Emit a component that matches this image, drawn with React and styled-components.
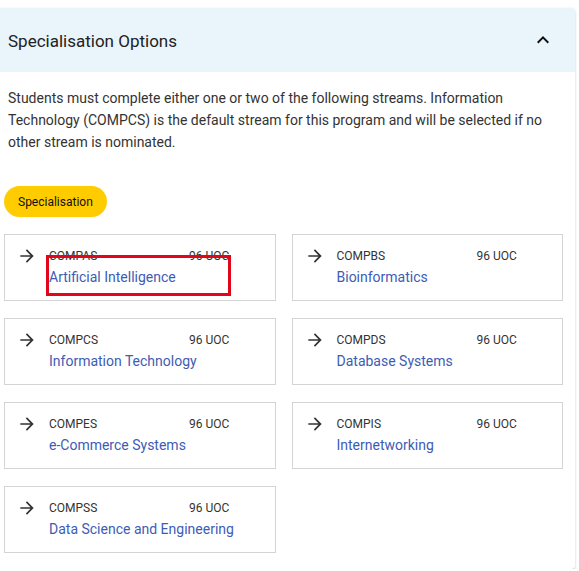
import React from 'react';
import styled, { createGlobalStyle } from 'styled-components';

const GlobalStyle = createGlobalStyle`
  body {
    margin: 0;
    background: #ffffff;
    font-family: Roboto, "Liberation Sans", Arial, sans-serif;
  }
`;

const streams = [
  { code: 'COMPAS', uoc: 96, title: 'Artificial Intelligence', marked: true },
  { code: 'COMPBS', uoc: 96, title: 'Bioinformatics' },
  { code: 'COMPCS', uoc: 96, title: 'Information Technology' },
  { code: 'COMPDS', uoc: 96, title: 'Database Systems' },
  { code: 'COMPES', uoc: 96, title: 'e-Commerce Systems' },
  { code: 'COMPIS', uoc: 96, title: 'Internetworking' },
  { code: 'COMPSS', uoc: 96, title: 'Data Science and Engineering' },
];

const ArrowIcon = () => (
  <svg width="20" height="20" viewBox="0 0 24 24" fill="#333">
    <path d="M12 4l-1.41 1.41L16.17 11H4v2h12.17l-5.58 5.59L12 20l8-8z" />
  </svg>
);

const ChevronUp = () => (
  <svg width="24" height="24" viewBox="0 0 24 24" fill="#111">
    <path d="M12 8l-6 6 1.41 1.41L12 10.83l4.59 4.58L18 14z" />
  </svg>
);

export default function App() {
  return (
    <>
      <GlobalStyle />
      <Panel>
        <Header>
          <Title>Specialisation Options</Title>
          <ChevronUp />
        </Header>
        <Details>
          <Description>
            Students must complete either one or two of the following streams. Information
            Technology (COMPCS) is the default stream for this program and will be selected if no
            other stream is nominated.
          </Description>
          <Badge>Specialisation</Badge>
          <CardGrid>
            {streams.map((s) => (
              <Card key={s.code}>
                <IconCell>
                  <ArrowIcon />
                </IconCell>
                <CardBody>
                  <MetaRow>
                    <Code>{s.code}</Code>
                    <Uoc>{s.uoc} UOC</Uoc>
                  </MetaRow>
                  <StreamTitle>{s.title}</StreamTitle>
                </CardBody>
                {s.marked && <Highlight />}
              </Card>
            ))}
          </CardGrid>
        </Details>
      </Panel>
    </>
  );
}

const Panel = styled.div`
  margin-top: 8px;
  width: 575px;
  background: #fff;
  border-radius: 0 4px 4px 0;
  box-shadow: 0 1px 3px rgba(0, 0, 0, 0.18), 0 1px 1px rgba(0, 0, 0, 0.08);
  overflow: hidden;
`;

const Header = styled.div`
  height: 64px;
  display: flex;
  align-items: center;
  justify-content: space-between;
  padding: 0 20px 0 8px;
  background: #e9f4fb;
`;

const Title = styled.h2`
  margin: 0;
  padding-top: 1px;
  font-size: 17px;
  font-weight: 400;
  color: #222;
`;

const Details = styled.div`
  padding: 15px 12px 16px 4px;
`;

const Description = styled.p`
  margin: 0 0 33px;
  padding-left: 4px;
  font-size: 14px;
  line-height: 22px;
  color: #333;
`;

const Badge = styled.span`
  display: inline-flex;
  align-items: center;
  height: 31px;
  padding: 0 14px;
  border-radius: 16px;
  background: #ffcc00;
  font-size: 12px;
  color: #111;
`;

const CardGrid = styled.div`
  margin-top: 17px;
  display: grid;
  grid-template-columns: 1fr 1fr;
  column-gap: 16px;
  row-gap: 17px;
`;

const Card = styled.div`
  position: relative;
  display: flex;
  border: 1px solid #d4d4d4;
  padding: 12px 0 13px;
`;

const IconCell = styled.div`
  width: 44px;
  padding-left: 12px;
  box-sizing: border-box;
  display: flex;
  align-items: flex-start;
  margin-top: -1px;
`;

const CardBody = styled.div`
  display: flex;
  flex-direction: column;
`;

const MetaRow = styled.div`
  display: flex;
  font-size: 12px;
  line-height: 18px;
  color: #333;
`;

const Code = styled.span`
  width: 140px;
`;

const Uoc = styled.span``;

const StreamTitle = styled.span`
  margin-top: 2px;
  font-size: 14px;
  line-height: 20px;
  color: #3d5cb5;
`;

const Highlight = styled.div`
  position: absolute;
  left: 41px;
  top: 20px;
  width: 185px;
  height: 41px;
  box-sizing: border-box;
  border: 3px solid #e2061b;
  pointer-events: none;
`;
